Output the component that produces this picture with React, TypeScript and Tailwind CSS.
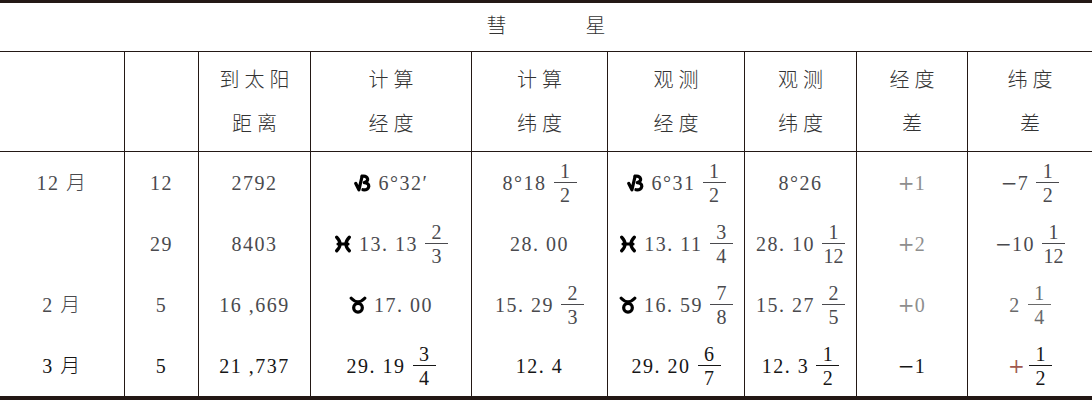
import type { ReactNode } from "react";

type Sym = "cap" | "pis" | "tau";

interface CellSpec {
  sym?: Sym;
  sign?: string;
  v?: string;
  f?: [string, string];
  tone?: string;
}

const line = "border-[#231815]";

// zodiac glyphs, drawn bold like the printed table
function Zodiac({ sym }: { sym: Sym }) {
  return (
    <svg viewBox="0 0 20 20" className="w-[18px] h-[18px] shrink-0" fill="none" stroke="#000" strokeWidth={3.6} strokeLinecap="round" strokeLinejoin="round">
      {sym === "cap" && (
        <>
          <path d="M2 10.5 L5.5 17.5 L9 2.5" />
          <path d="M9 2.5 C15.5 1.5 17.5 8 11.5 9.5 C18.5 10 18 18.5 10 17.5" />
        </>
      )}
      {sym === "pis" && (
        <>
          <path d="M3 2.5 Q10.5 10 3 17.5" />
          <path d="M17 2.5 Q9.5 10 17 17.5" />
          <path d="M4.5 10 H15.5" />
        </>
      )}
      {sym === "tau" && (
        <>
          <path d="M2.5 2.5 Q10 10.5 17.5 2.5" />
          <circle cx="10" cy="13" r="4.8" />
        </>
      )}
    </svg>
  );
}

function Frac({ n, d }: { n: string; d: string }) {
  return (
    <span className="inline-flex flex-col items-center leading-[20px] tracking-normal">
      <span className="min-w-[23px] text-center">{n}</span>
      <span className="h-px w-full bg-current mt-[1px]" />
      <span className="min-w-[23px] text-center mt-[2px]">{d}</span>
    </span>
  );
}

function Sign({ s, className = "" }: { s: string; className?: string }) {
  return <span className={`font-['DejaVu_Serif'] tracking-normal ${className}`}>{s}</span>;
}

function Cell({ spec, first }: { spec: CellSpec; first?: boolean }) {
  return (
    <div
      className={`flex items-center justify-center gap-[7px] tracking-[1.5px] ${first ? "" : `border-l ${line}`}`}
      style={spec.tone ? { color: spec.tone } : undefined}
    >
      {spec.sym && <Zodiac sym={spec.sym} />}
      {(spec.sign || spec.v) && (
        <span>
          {spec.sign && <Sign s={spec.sign} />}
          {spec.v}
        </span>
      )}
      {spec.f && <Frac n={spec.f[0]} d={spec.f[1]} />}
    </div>
  );
}

const gray = "#4a4a4e";
const light = "#8e8e8e";
const black = "#161616";

const rows: { tone: string; cells: CellSpec[] }[] = [
  {
    tone: gray,
    cells: [
      { v: "12 月" },
      { v: "12" },
      { v: "2792" },
      { sym: "cap", v: "6°32′" },
      { v: "8°18", f: ["1", "2"] },
      { sym: "cap", v: "6°31", f: ["1", "2"] },
      { v: "8°26" },
      { sign: "+", v: "1", tone: light },
      { sign: "−", v: "7", f: ["1", "2"] },
    ],
  },
  {
    tone: gray,
    cells: [
      {},
      { v: "29" },
      { v: "8403" },
      { sym: "pis", v: "13. 13", f: ["2", "3"] },
      { v: "28. 00" },
      { sym: "pis", v: "13. 11", f: ["3", "4"] },
      { v: "28. 10", f: ["1", "12"] },
      { sign: "+", v: "2", tone: light },
      { sign: "−", v: "10", f: ["1", "12"] },
    ],
  },
  {
    tone: gray,
    cells: [
      { v: "2 月" },
      { v: "5" },
      { v: "16 ,669" },
      { sym: "tau", v: "17. 00" },
      { v: "15. 29", f: ["2", "3"] },
      { sym: "tau", v: "16. 59", f: ["7", "8"] },
      { v: "15. 27", f: ["2", "5"] },
      { sign: "+", v: "0", tone: light },
      { v: "2", f: ["1", "4"], tone: "#6a6a6a" },
    ],
  },
  {
    tone: black,
    cells: [
      { v: "3 月" },
      { v: "5" },
      { v: "21 ,737" },
      { v: "29. 19", f: ["3", "4"] },
      { v: "12. 4" },
      { v: "29. 20", f: ["6", "7"] },
      { v: "12. 3", f: ["1", "2"] },
      { sign: "−", v: "1" },
      { f: ["1", "2"] },
    ],
  },
];

const heads: [string, string][] = [
  ["到太阳", "距离"],
  ["计算", "经度"],
  ["计算", "纬度"],
  ["观测", "经度"],
  ["观测", "纬度"],
  ["经度", "差"],
  ["纬度", "差"],
];

const cols = "grid grid-cols-[124px_74px_112px_161px_136px_137px_112px_111px_125px]";

function HeadCell({ children }: { children?: ReactNode }) {
  return (
    <div className={`flex flex-col items-center justify-center leading-[44px] tracking-[5px] pl-[5px] border-l ${line}`}>
      {children}
    </div>
  );
}

export default function App() {
  return (
    <div
      className={`w-[1092px] h-[400px] bg-white text-[20px] font-light border-t-[3px] border-b-[4px] ${line}`}
      style={{ fontFamily: '"Liberation Serif", "Noto Sans CJK SC", serif' }}
    >
      <div className={`h-[49px] border-b ${line} flex items-center justify-center gap-[79px] text-[#333] pb-[3px]`}>
        <span>彗</span>
        <span>星</span>
      </div>

      <div className={`${cols} h-[100px] border-b ${line} text-[#333]`}>
        <div />
        <HeadCell />
        {heads.map(([a, b]) => (
          <HeadCell key={a + b}>
            <span>{a}</span>
            <span>{b}</span>
          </HeadCell>
        ))}
      </div>

      {rows.map((r, i) => (
        <div key={i} className={`${cols} h-[61px]`} style={{ color: r.tone }}>
          {r.cells.map((c, j) =>
            i === 3 && j === 8 ? (
              <div key={j} className={`flex items-center justify-center gap-[4px] border-l ${line}`}>
                <Sign s="+" className="text-[#a0584f]" />
                <Frac n="1" d="2" />
              </div>
            ) : (
              <Cell key={j} spec={c} first={j === 0} />
            ),
          )}
        </div>
      ))}
    </div>
  );
}
